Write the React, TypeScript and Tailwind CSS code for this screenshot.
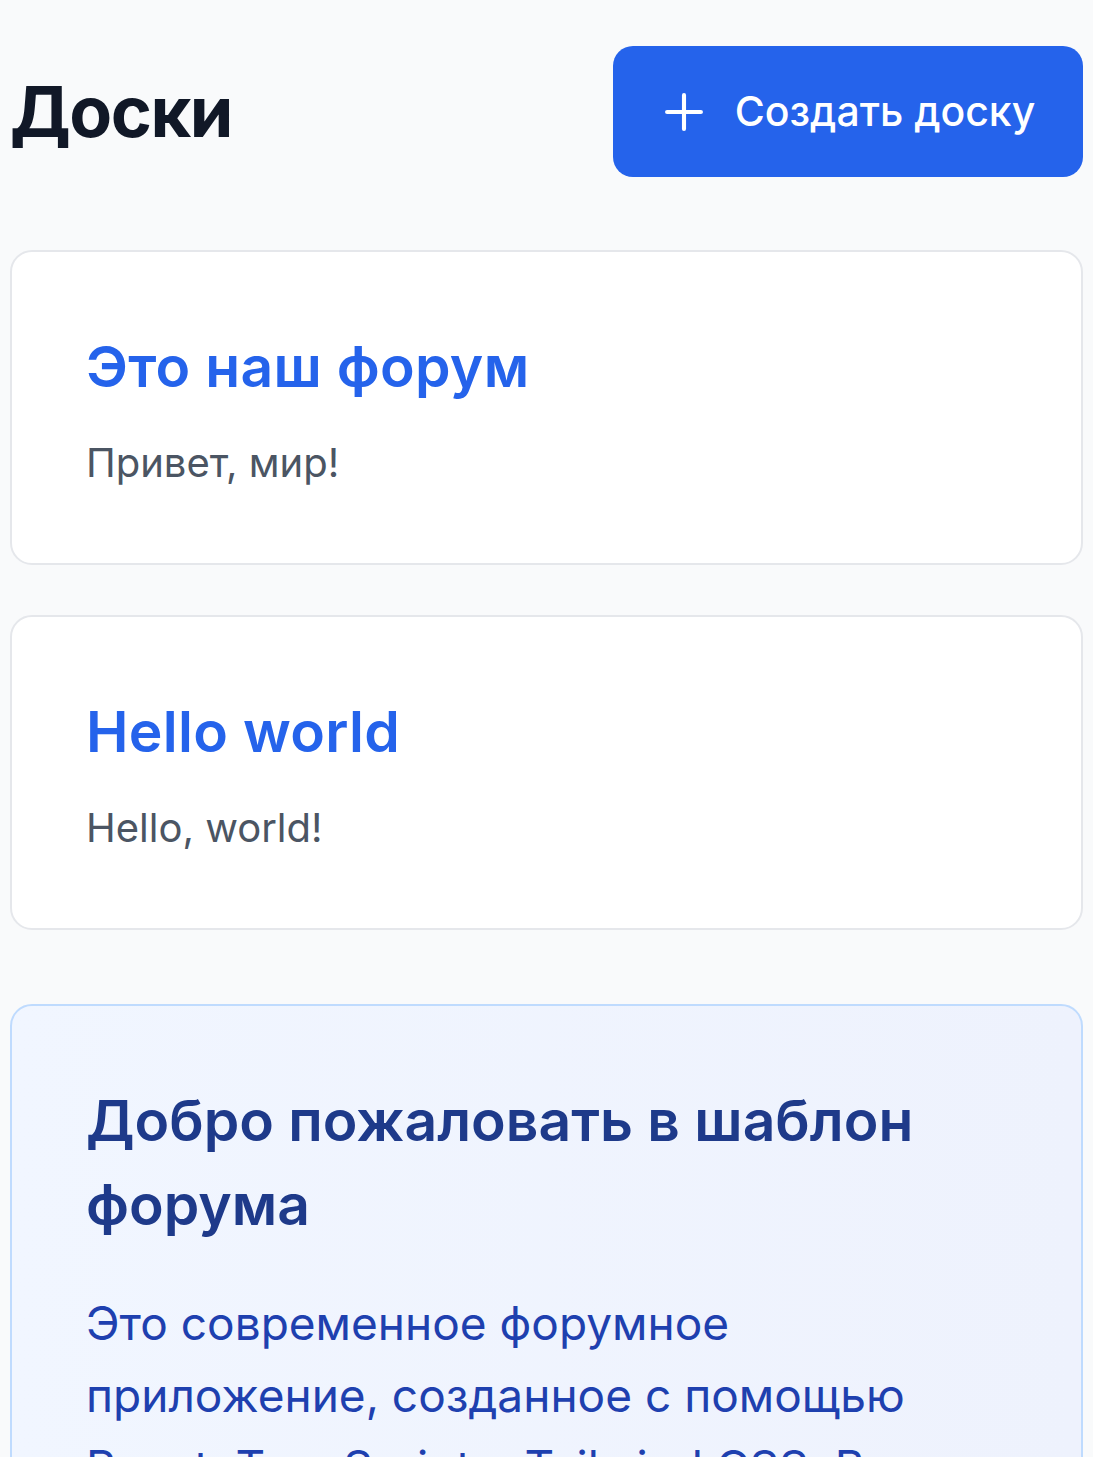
import { Plus } from 'lucide-react';

const boards = [
  { id: 1, title: 'Это наш форум', description: 'Привет, мир!' },
  { id: 2, title: 'Hello world', description: 'Hello, world!' },
];

export default function App() {
  return (
    <div className="min-h-screen bg-[#f9fafb] px-[10px] pt-[46px] pb-16 font-['Inter','Noto_Sans',sans-serif]">
      <div className="flex items-center justify-between">
        <h1 className="text-[70px] leading-[84px] font-bold tracking-[-1.5px] text-[#111827]">Доски</h1>
        <button className="flex h-[131px] w-[470px] items-center justify-center gap-[22px] rounded-[20px] bg-[#2563eb] pr-[6px] text-white">
          <Plus size={58} strokeWidth={1.7} />
          <span className="text-[41px] font-medium leading-none">Создать доску</span>
        </button>
      </div>

      <div className="mt-[73px] space-y-[50px]">
        {boards.map((board) => (
          <div
            key={board.id}
            className="rounded-[22px] border-2 border-[#e5e7eb] bg-white px-[74px] pt-[79px] pb-[72px]"
          >
            <h2 className="text-[57px] leading-[72px] font-semibold tracking-[0.3px] text-[#2563eb]">{board.title}</h2>
            <p className="mt-[31px] text-[40px] leading-[57px] text-[#4b5563]">{board.description}</p>
          </div>
        ))}
      </div>

      <div className="mt-[74px] rounded-[22px] border-2 border-[#bfdbfe] bg-linear-to-r from-[#f1f6ff] to-[#eef2fd] px-[74px] pt-[73px] pb-[74px]">
        <h2 className="text-[57px] leading-[84px] font-semibold text-[#1e3a8a]">Добро пожаловать в шаблон форума</h2>
        <p className="mt-[40px] text-[46px] leading-[72px] text-[#1e40af]">
          Это современное форумное приложение, созданное с помощью React, TypeScript и Tailwind CSS. Вы можете
          создавать доски, публиковать темы и участвовать в обсуждениях.
        </p>
      </div>
    </div>
  );
}
